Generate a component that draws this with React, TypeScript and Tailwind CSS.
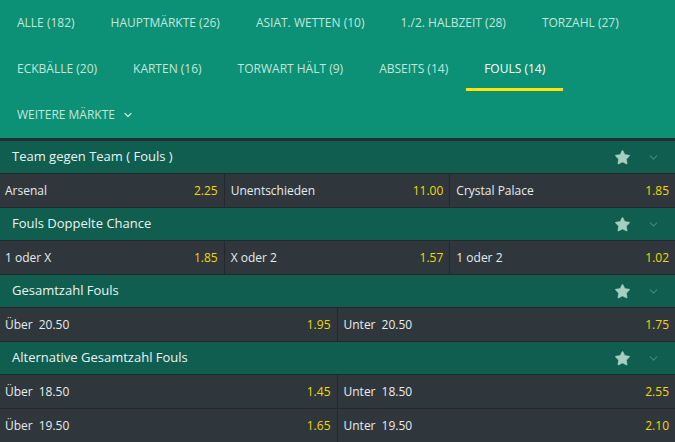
import { Star, ChevronDown } from "lucide-react";

type Tab = { label: string; active?: boolean };

const tabRows: Tab[][] = [
  [
    { label: "ALLE (182)" },
    { label: "HAUPTMÄRKTE (26)" },
    { label: "ASIAT. WETTEN (10)" },
    { label: "1./2. HALBZEIT (28)" },
    { label: "TORZAHL (27)" },
  ],
  [
    { label: "ECKBÄLLE (20)" },
    { label: "KARTEN (16)" },
    { label: "TORWART HÄLT (9)" },
    { label: "ABSEITS (14)" },
    { label: "FOULS (14)", active: true },
  ],
];

type Pick = { name: string; line?: string; odds: string };

type Market = { title: string; rows: Pick[][] };

const markets: Market[] = [
  {
    title: "Team gegen Team ( Fouls )",
    rows: [
      [
        { name: "Arsenal", odds: "2.25" },
        { name: "Unentschieden", odds: "11.00" },
        { name: "Crystal Palace", odds: "1.85" },
      ],
    ],
  },
  {
    title: "Fouls Doppelte Chance",
    rows: [
      [
        { name: "1 oder X", odds: "1.85" },
        { name: "X oder 2", odds: "1.57" },
        { name: "1 oder 2", odds: "1.02" },
      ],
    ],
  },
  {
    title: "Gesamtzahl Fouls",
    rows: [
      [
        { name: "Über", line: "20.50", odds: "1.95" },
        { name: "Unter", line: "20.50", odds: "1.75" },
      ],
    ],
  },
  {
    title: "Alternative Gesamtzahl Fouls",
    rows: [
      [
        { name: "Über", line: "18.50", odds: "1.45" },
        { name: "Unter", line: "18.50", odds: "2.55" },
      ],
      [
        { name: "Über", line: "19.50", odds: "1.65" },
        { name: "Unter", line: "19.50", odds: "2.10" },
      ],
    ],
  },
];

function TabItem({ tab }: { tab: Tab }) {
  return (
    <div
      className={`relative flex h-[46px] items-center px-[18px] first:pl-[17px] ${
        tab.active ? "text-white" : "text-[#c2e6db]"
      }`}
    >
      {tab.label}
      {tab.active && (
        <span className="absolute bottom-[1px] left-0 right-0 h-[3px] bg-[#ffe500]" />
      )}
    </div>
  );
}

function PickCell({ pick, first }: { pick: Pick; first: boolean }) {
  return (
    <div
      className={`flex flex-1 items-center justify-between pr-[6px] ${
        first ? "pl-[5px]" : "border-l border-[#22282c] pl-[6px]"
      }`}
    >
      <span className="text-[#e6ecee]">
        {pick.name}
        {pick.line && <span className="ml-[6px]">{pick.line}</span>}
      </span>
      <span className="text-[#f0d80a]">{pick.odds}</span>
    </div>
  );
}

function MarketBlock({ market }: { market: Market }) {
  return (
    <div>
      <div className="flex h-[33px] items-center justify-between border-b border-[#22282c] bg-[#0f5e50] pl-3 pr-[15px]">
        <span className="text-[13px] text-[#eaf4f1]">{market.title}</span>
        <div className="flex items-center gap-[16px]">
          <Star size={17} className="fill-[#a6cfc4] text-[#a6cfc4]" strokeWidth={1} />
          <ChevronDown size={13} className="text-[#3b8e7c]" strokeWidth={2} />
        </div>
      </div>
      {market.rows.map((row, i) => (
        <div
          key={i}
          className="flex h-[34px] border-b border-[#22282c] bg-[#30373c] text-[12px]"
        >
          {row.map((pick, j) => (
            <PickCell key={j} pick={pick} first={j === 0} />
          ))}
        </div>
      ))}
    </div>
  );
}

export default function App() {
  return (
    <div
      className="h-[442px] w-[675px] overflow-hidden bg-[#30373c]"
      style={{ fontFamily: '"Open Sans", "Liberation Sans", sans-serif' }}
    >
      <nav className="border-b-[3px] border-[#262c30] bg-[#0d9176] text-[12px]">
        {tabRows.map((row, i) => (
          <div key={i} className="flex">
            {row.map((tab) => (
              <TabItem key={tab.label} tab={tab} />
            ))}
          </div>
        ))}
        <div className="flex h-[46px] items-center gap-[7px] pl-[17px] text-[#c2e6db]">
          WEITERE MÄRKTE
          <ChevronDown size={12} strokeWidth={2.5} />
        </div>
      </nav>
      {markets.map((m) => (
        <MarketBlock key={m.title} market={m} />
      ))}
    </div>
  );
}
